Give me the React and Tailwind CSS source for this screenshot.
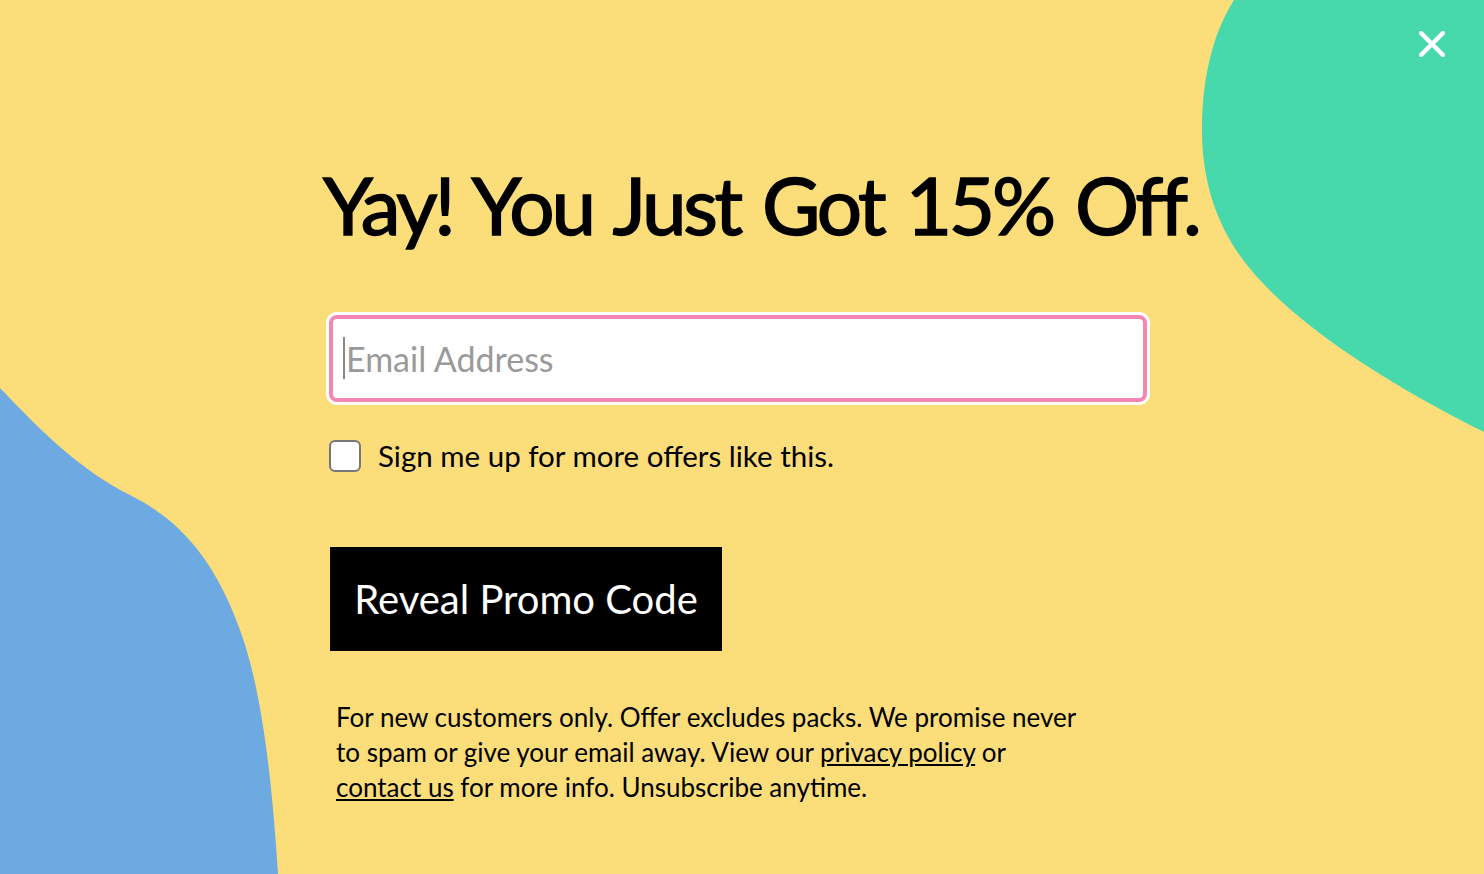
import { useState } from 'react';

const Blobs = () => (
  <svg
    className="absolute inset-0 w-full h-full"
    viewBox="0 0 1484 874"
    preserveAspectRatio="none"
  >
    <path
      d="M1234 0 C1212 35 1202 80 1202 130 C1202 190 1222 240 1260 280 C1310 335 1400 390 1484 432 L1484 0 Z"
      fill="#47D8AB"
    />
    <path
      d="M0 388 C40 430 80 470 130 495 C180 520 215 560 240 630 C262 690 272 780 278 874 L0 874 Z"
      fill="#6EAAE2"
    />
  </svg>
);

const App = () => {
  const [email, setEmail] = useState('');
  const [checked, setChecked] = useState(false);

  return (
    <div
      className="relative w-full h-[874px] overflow-hidden bg-[#FBDD7A] text-black"
      style={{ fontFamily: 'Lato, "Noto Sans", sans-serif' }}
    >
      <Blobs />

      <button className="absolute top-[30px] right-[38px] z-20 w-[28px] h-[28px] flex items-center justify-center">
        <svg width="26" height="26" viewBox="0 0 26 26">
          <path d="M2 2 L24 24 M24 2 L2 24" stroke="#fff" strokeWidth="4.5" strokeLinecap="round" />
        </svg>
      </button>

      <div className="relative z-10 flex flex-col pl-[326px] pt-[154px]">
        <h1 className="text-[80px] leading-[100px] font-normal tracking-[-3.3px] [word-spacing:5px] -ml-[3px] [-webkit-text-stroke:1.5px_#000]">
          Yay! You Just Got 15% Off.
        </h1>

        <div className="mt-[58px] w-[824px] rounded-[11px] bg-white p-[3px]">
          <div className="relative">
            <input
              type="email"
              value={email}
              onChange={(e) => setEmail(e.target.value)}
              placeholder="Email Address"
              className="w-full h-[87px] rounded-[8px] border-[4px] border-[#F486B6] bg-white pl-[13px] text-[34px] text-black placeholder:text-[#9a9a9a] outline-none"
            />
            {!email && <span className="absolute left-[14px] top-[22px] w-[2px] h-[42px] bg-[#888]" />}
          </div>
        </div>

        <label className="mt-[35px] flex items-center gap-[17px] ml-[3px] cursor-pointer">
          <span
            onClick={() => setChecked(!checked)}
            className={`w-[32px] h-[32px] rounded-[6px] border-2 border-[#777] ${checked ? 'bg-black' : 'bg-white'}`}
          />
          <span className="text-[29.5px] leading-[32px]">Sign me up for more offers like this.</span>
        </label>

        <button className="mt-[75px] ml-[4px] w-[392px] h-[104px] bg-black text-white text-[40px] flex items-center justify-center">
          Reveal Promo Code
        </button>

        <p className="mt-[49px] ml-[10px] text-[26px] leading-[35px]">
          For new customers only. Offer excludes packs. We promise never
          <br />
          to spam or give your email away. View our <a href="#" className="underline">privacy policy</a> or
          <br />
          <a href="#" className="underline">contact us</a> for more info. Unsubscribe anytime.
        </p>
      </div>
    </div>
  );
};

export default App;
